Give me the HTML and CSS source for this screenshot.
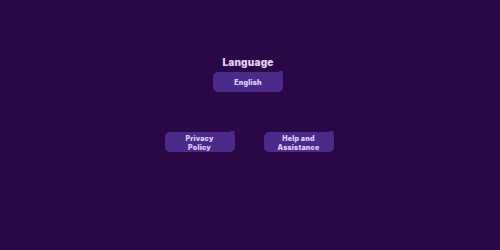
FILE: index.html
```html
<!DOCTYPE html>
<html lang="en">
<head>
<meta charset="utf-8">
<title>Settings</title>
<link rel="stylesheet" href="styles.css">
</head>
<body>
<main class="page">
  <section class="lang">
    <h2 class="heading">Language</h2>
    <button class="btn">English</button>
  </section>
  <nav class="links">
    <button class="btn">Privacy<br>Policy</button>
    <button class="btn">Help and<br>Assistance</button>
  </nav>
</main>
</body>
</html>
```
FILE: styles.css
```css
html, body {
  margin: 0;
  padding: 0;
  background: #290845;
  width: 500px;
  height: 250px;
  overflow: hidden;
  font-family: "Inter", "Open Sans", sans-serif;
}
.page {
  display: flex;
  flex-direction: column;
  align-items: center;
  padding-top: 56px;
}
.lang {
  display: flex;
  flex-direction: column;
  align-items: center;
  margin-right: 4px;
}
.heading {
  margin: 0 0 4px 0;
  font-size: 10px;
  line-height: 12px;
  font-weight: 900;
  letter-spacing: 0.2px;
  color: #e0cdf8;
}
.btn {
  position: relative;
  width: 70px;
  height: 20px;
  padding: 1px 0 0 0;
  border: none;
  border-radius: 5px;
  background: #4a2b8b;
  color: #dccaf5;
  font-family: inherit;
  font-size: 7px;
  line-height: 9px;
  font-weight: 900;
  letter-spacing: 0.2px;
  text-align: center;
}
.btn::after {
  content: "";
  position: absolute;
  top: -1px;
  right: 0;
  width: 7px;
  height: 7px;
  background: #4a2b8b;
  clip-path: polygon(35% 0, 100% 0, 100% 65%);
}
.links {
  display: flex;
  gap: 29px;
  margin-top: 40px;
  margin-right: 2px;
}
```
